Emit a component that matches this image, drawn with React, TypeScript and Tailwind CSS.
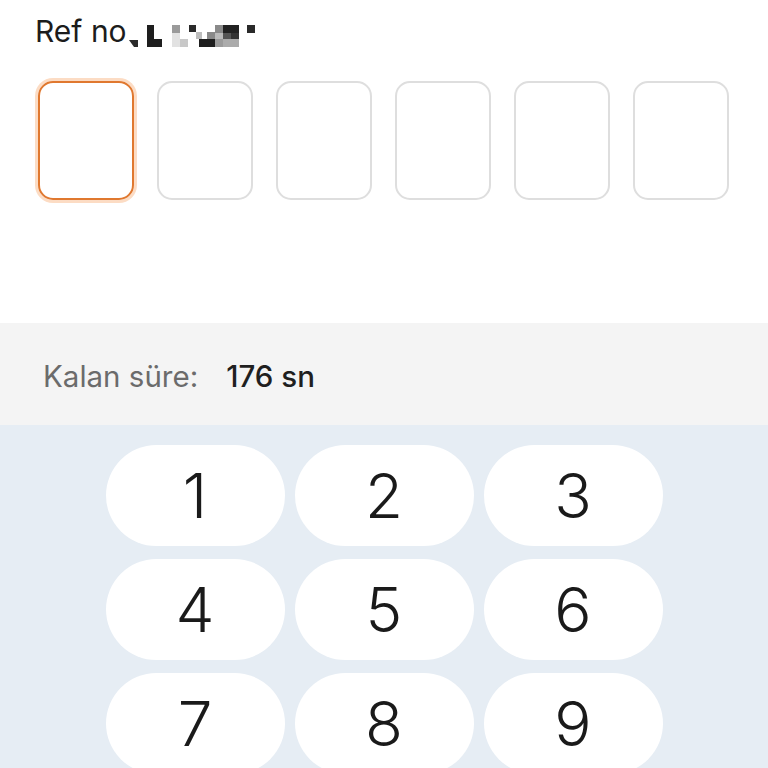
import React from 'react';

const font = { fontFamily: 'Inter, "Noto Sans", sans-serif' };

// blurred reference number, drawn as a mosaic
const Mosaic = () => (
  <svg width="132" height="27" viewBox="0 0 132 27" className="ml-[2px] mt-[9px]">
    <path d="M0 18 L9 18 L9 25 L5 25 Z" fill="#2a2a2a" />
    <rect x="18" y="3" width="7" height="22" fill="#1e1e1e" />
    <rect x="25" y="17" width="8" height="8" fill="#1e1e1e" />
    <rect x="43" y="3" width="8" height="8" fill="#9a9a9a" />
    <rect x="43" y="11" width="8" height="14" fill="#e2e2e2" />
    <rect x="51" y="17" width="8" height="8" fill="#c8c8c8" />
    <rect x="60" y="3" width="7" height="7" fill="#2a2a2a" />
    <rect x="67" y="10" width="6" height="7" fill="#bdbdbd" />
    <rect x="70" y="17" width="22" height="8" fill="#1e1e1e" />
    <rect x="78" y="10" width="8" height="7" fill="#8a8a8a" />
    <rect x="86" y="3" width="8" height="8" fill="#8a8a8a" />
    <rect x="94" y="3" width="16" height="8" fill="#222" />
    <rect x="86" y="11" width="8" height="6" fill="#bbb" />
    <rect x="94" y="11" width="8" height="6" fill="#555" />
    <rect x="102" y="11" width="8" height="6" fill="#333" />
    <rect x="86" y="17" width="8" height="8" fill="#9a9a9a" />
    <rect x="94" y="17" width="16" height="8" fill="#ababab" />
    <rect x="118" y="3" width="8" height="8" fill="#2a2a2a" />
  </svg>
);

const keys = ['1', '2', '3', '4', '5', '6', '7', '8', '9'];

export default function App() {
  return (
    <div className="w-[768px] h-[768px] overflow-hidden bg-white" style={font}>
      {/* Code entry */}
      <div className="h-[323px] px-[38px]">
        <div className="flex items-start pt-[13px] -ml-[3px]">
          <span className="text-[30px] leading-[36px] text-[#1c1c1c]">Ref no</span>
          <Mosaic />
        </div>
        <div className="mt-[32px] flex gap-[23px]">
          {[0, 1, 2, 3, 4, 5].map((i) => (
            <div
              key={i}
              className={
                i === 0
                  ? 'w-[96px] h-[119px] rounded-[15px] border-2 border-[#e0782f] ring-[3px] ring-[#fcdcc4]'
                  : 'w-[96px] h-[119px] rounded-[15px] border-2 border-[#dedede]'
              }
            />
          ))}
        </div>
      </div>

      {/* Timer */}
      <div className="h-[102px] bg-[#f4f4f4] flex items-center pl-[43px] pt-[4px] text-[29.5px]">
        <span className="text-[#6b6b6b]">Kalan süre:</span>
        <span className="ml-[28px] text-[#1f1f1f] font-medium">176 sn</span>
      </div>

      {/* Keypad */}
      <div className="bg-[#e6edf4] h-[343px] pt-[20px] flex justify-center">
        <div className="grid grid-cols-[179px_179px_179px] gap-x-[10px] gap-y-[13px] content-start">
          {keys.map((k) => (
            <button
              key={k}
              className="h-[101px] rounded-full bg-white flex items-center justify-center text-[62px] font-light text-[#1a1a1a]"
            >
              {k}
            </button>
          ))}
        </div>
      </div>
    </div>
  );
}
